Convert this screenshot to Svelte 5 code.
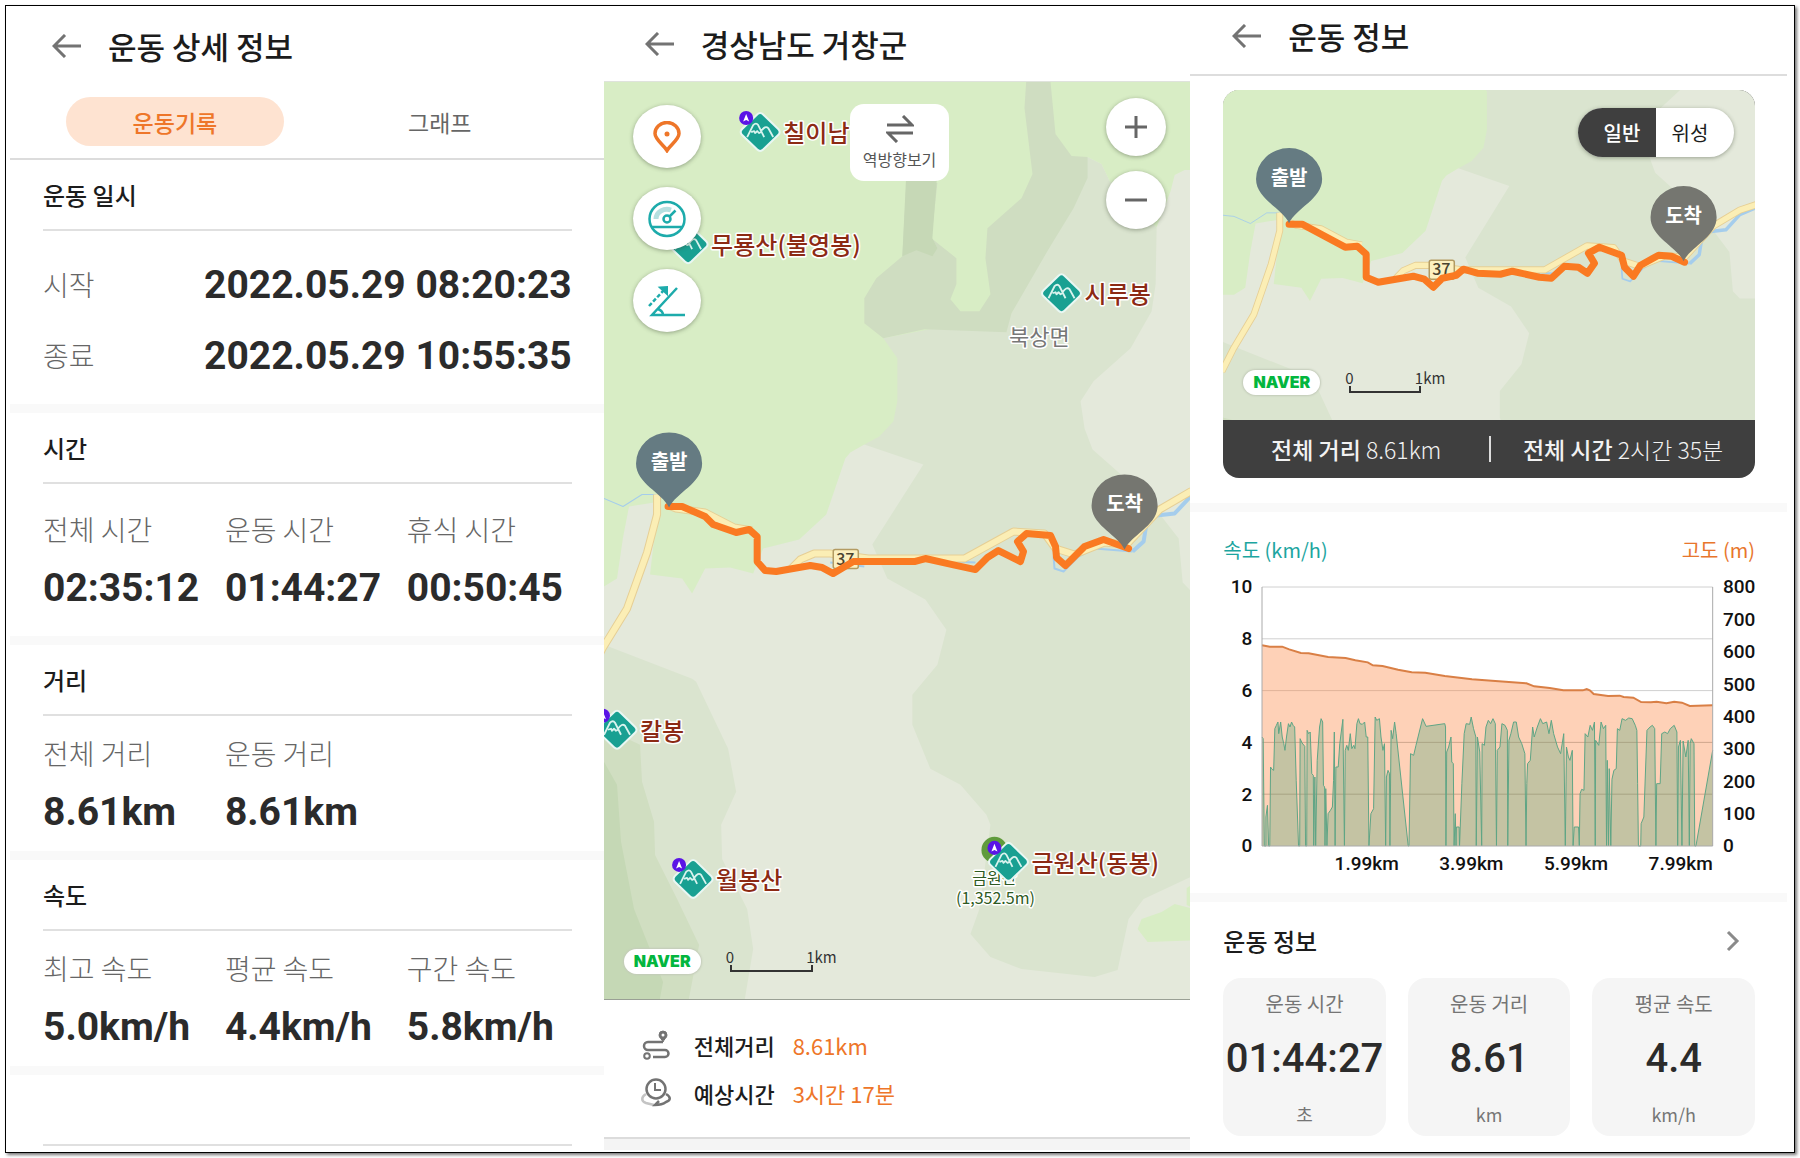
<script>
  let tab = $state('record');
  let mapType = $state('normal');

  const times = [
    { label: '시작', value: '2022.05.29 08:20:23' },
    { label: '종료', value: '2022.05.29 10:55:35' }
  ];

  const groups = [
    {
      title: '시간',
      roomy: true,
      items: [
        { label: '전체 시간', value: '02:35:12' },
        { label: '운동 시간', value: '01:44:27' },
        { label: '휴식 시간', value: '00:50:45' }
      ]
    },
    {
      title: '거리',
      items: [
        { label: '전체 거리', value: '8.61km' },
        { label: '운동 거리', value: '8.61km' }
      ]
    },
    {
      title: '속도',
      items: [
        { label: '최고 속도', value: '5.0km/h' },
        { label: '평균 속도', value: '4.4km/h' },
        { label: '구간 속도', value: '5.8km/h' }
      ]
    }
  ];

  const cards = [
    { label: '운동 시간', value: '01:44:27', unit: '초' },
    { label: '운동 거리', value: '8.61', unit: 'km' },
    { label: '평균 속도', value: '4.4', unit: 'km/h' }
  ];

  const peaks = [
    { x: 156, y: 50, name: '칠이남', badge: true },
    { x: 84, y: 162, name: '무룡산(불영봉)' },
    { x: 457, y: 211, name: '시루봉' },
    { x: 13, y: 647, name: '칼봉', badge: true },
    { x: 89, y: 796, name: '월봉산', badge: true },
    { x: 404, y: 779, name: '금원산(동봉)', badge: true }
  ];

  const speedTicks = [10, 8, 6, 4, 2, 0];
  const altTicks = [800, 700, 600, 500, 400, 300, 200, 100, 0];
  const distTicks = ['1.99km', '3.99km', '5.99km', '7.99km'];

  // plot space: 1159 x 777, y grows downwards
  const altitude =
    '0,175 20,179 52,179 70,187 100,198 120,199 170,210 215,213 240,220 272,226 285,235 310,237 350,248 385,256 420,257 470,267 540,277 600,282 680,289 700,298 740,303 775,310 825,310 835,306 843,310 853,321 890,327 920,326 930,330 955,332 975,345 1000,346 1015,344 1040,349 1060,344 1080,347 1100,357 1159,355';
  const speed =
    '0,450 3,455 6,777 10,777 10,690 14,655 17,777 20,777 22,540 26,547 30,550 33,425 37,415 41,405 43,440 48,405 52,450 56,470 59,490 63,450 68,410 72,420 76,405 80,415 84,420 88,580 94,777 97,777 98,455 103,468 110,478 112,777 115,777 116,430 120,440 124,435 128,560 132,565 133,777 136,570 138,777 142,520 148,420 152,395 156,405 158,595 161,600 162,777 164,605 167,777 170,680 176,670 181,660 184,580 186,435 188,777 190,540 196,540 200,470 208,397 212,777 214,490 218,475 222,490 227,440 231,485 236,475 239,485 244,410 248,395 252,410 258,412 264,405 268,450 272,450 275,777 280,680 287,665 291,390 295,400 302,395 306,450 311,490 315,470 318,777 320,570 324,550 328,560 329,777 332,430 336,455 341,405 345,440 376,777 378,777 382,500 390,505 396,475 413,395 422,418 470,410 472,420 473,777 475,495 480,480 486,450 488,525 492,530 494,777 497,680 499,777 500,720 507,720 508,777 514,590 520,440 525,410 534,412 538,390 544,425 550,450 551,777 554,450 560,495 565,777 566,470 572,475 576,420 582,400 588,410 594,395 600,410 603,777 605,490 612,480 617,410 625,415 631,430 632,777 635,460 640,440 647,405 654,405 660,450 668,470 676,500 679,777 681,590 683,530 690,520 696,420 700,450 708,420 716,395 722,410 732,405 738,440 744,400 750,440 760,480 768,500 776,440 780,777 783,480 788,510 792,520 798,490 800,777 803,720 814,720 816,777 818,620 822,607 828,610 831,440 838,450 844,415 850,430 855,405 857,777 858,460 866,475 872,405 878,425 884,415 886,777 888,520 891,777 893,545 897,777 900,577 905,550 911,545 914,425 920,430 926,395 935,400 943,393 952,395 960,415 964,430 966,590 968,777 974,777 975,710 982,690 990,430 998,420 1004,415 1010,425 1013,777 1015,590 1024,590 1028,440 1036,435 1043,440 1050,425 1060,415 1067,435 1069,777 1071,480 1076,460 1080,777 1083,462 1090,510 1096,460 1099,777 1101,470 1104,455 1111,470 1113,777 1116,777 1159,490';

  const roads =
    'M53 412V432L43 470 23 526-1 565-14 590M62 422 72 426 101 430 130 445 148 448M187 486 196 477 210 471H226L264 476H360L409 449 440 451 451 466 470 472 500 460 522 462 555 427 586 409 620 398';
</script>

{#snippet back()}
  <button class="back" aria-label="뒤로">
    <svg width="29" height="24" viewBox="0 0 29 24" fill="none" stroke="#737373" stroke-width="3">
      <path d="M13 1 2 12l11 11M2 12h27" />
    </svg>
  </button>
{/snippet}

{#snippet terrain()}
  <rect x="-20" y="-20" width="640" height="960" fill="#e4e9db" />
  <!-- 중간 숲 -->
  <path fill="#dae4cf" d="M279 256 402 230 483 75 497 82 505 99 552 145 551 202 547 229 526 266 489 299 476 319 480 346 488 367 513 389 553 429 574 456 578 500 586 508 620 508V794H586L539 816 524 836 513 887 490 894 417 886 386 874 366 851 375 826 386 742 382 732 356 702 326 686 308 642V612L333 582 342 547 321 517 283 496 268 462 319 382 260 362 240 340Z" />
  <path fill="#dae4cf" d="M-20 554 0 562 88 596 92 599 124 666 132 709 117 742 118 776 143 826 149 866 140 920H-20Z" />
  <!-- 밝은 숲 -->
  <path fill="#d8edc5" d="M-20-20H620V88H580L570 93 566 109 552 145 505 99 497 82 483 75 407 231 279 256 293 276V319L289 339 275 354 260 362 246 370 241 376 222 432 195 457 159 466 149 491 126 485 101 486 88 511 78 496 46 492 53 430 50 420 25 424 19 455 13 496 0 504H-20Z" />
  <path fill="#cfddc1" d="M423-20H446V0L451 52 467 74 483 75V96L469 126 444 167 407 231 402 250 320 247 279 256 260 241V216L272 196 298 174 302 101H333L327 156 352 176V202L346 217 356 229H375L386 212 381 176 383 146 417 116 428 92 420 26Z" />
  <path fill="#c6d8b6" d="M302 90H333L328 156 333 166 328 174 312 168 298 174Z" />
  <!-- 왼쪽 아래 능선 -->
  <path fill="#d0dec1" d="M-20 640 0 645 36 662 38 699 50 739 51 772 73 816 95 862 84 920H-20Z" />
  <path fill="#c5d8b5" d="M-20 670 0 679 13 702 17 759 30 826 59 899 55 920H-20Z" />
  <path fill="#d8edc5" d="M600 829 570 821 557 829 537 836 533 846 543 859 600 857ZM600 795 582 805V822L600 830Z" />
  <!-- 하천 -->
  <g fill="none" stroke="#a5cdec" stroke-linejoin="round">
    <path stroke-width="1" d="M-20 414 0 416 19 424 38 412 52 412" />
    <path stroke-width="4" d="M620 400 586 414 570 431 543 434 539 459 528 469" />
    <path stroke-width="2" d="M528 469 490 466 474 474 459 489 450 486 449 474M348 479 371 480M226 480l34 4" />
  </g>
  <!-- 도로 -->
  <g fill="none" stroke-linejoin="round">
    <path stroke="#e6cf95" stroke-width="8" d={roads} />
    <path stroke="#fbeeb5" stroke-width="6" d={roads} />
  </g>
{/snippet}

{#snippet roadSign(x, y)}
  <g>
    <rect {x} {y} width="25" height="19" rx="2" fill="#fcf0c0" stroke="#b39b62" stroke-width="1.5" />
    <text class="sign" x={x + 12} y={y + 15}>37</text>
  </g>
{/snippet}

{#snippet pin(x, y, label, color)}
  <g>
    <path d="M{x} {y}C{x - 7} {y - 15} {x - 33} {y - 24} {x - 33} {y - 44}a33 31 0 0 1 66 0C{x + 33} {y - 24} {x + 7} {y - 15} {x} {y}Z" fill={color} />
    <text class="pin-text" {x} y={y - 38}>{label}</text>
  </g>
{/snippet}

{#snippet legend(small)}
  <div class="legend">
    <span class="naver">NAVER</span>
    <div class="scale" class:small>
      <div class="scale-text"><span>0</span><span>1km</span></div>
      <div class="scale-bar"></div>
    </div>
  </div>
{/snippet}

<main class="frame">
  <!-- 운동 상세 정보 -->
  <section class="screen">
    <header class="bar">
      {@render back()}
      <h1>운동 상세 정보</h1>
    </header>
    <nav class="tabs">
      <button class:on={tab === 'record'} onclick={() => (tab = 'record')}>운동기록</button>
      <button class:on={tab === 'graph'} onclick={() => (tab = 'graph')}>그래프</button>
    </nav>

    <div class="block">
      <h2>운동 일시</h2>
      <dl class="times">
        {#each times as t}
          <div><dt>{t.label}</dt><dd>{t.value}</dd></div>
        {/each}
      </dl>
    </div>
    {#each groups as g}
      <div class="band"></div>
      <div class="block">
        <h2>{g.title}</h2>
        <dl class="stats" class:roomy={g.roomy}>
          {#each g.items as item}
            <div><dt>{item.label}</dt><dd>{item.value}</dd></div>
          {/each}
        </dl>
      </div>
    {/each}
    <div class="band"></div>
    <div class="block"><div class="empty"></div></div>
  </section>

  <!-- 코스 지도 -->
  <section class="screen">
    <header class="bar bar--map">
      {@render back()}
      <h1>경상남도 거창군</h1>
    </header>
    <div class="map">
      <svg class="canvas" viewBox="0 0 586 916" preserveAspectRatio="xMidYMid slice">
        {@render terrain()}
        {@render roadSign(229, 467)}
        <polyline class="route" points="64,424 78,424 101,434 109,442 132,450 145,447 153,454 153,479 161,488 172,489 206,483 218,485 229,491 249,479 310,479 321,476 348,482 371,487 383,475 394,468 416,479 419,469 413,459 422,451 446,453 451,464 452,475 461,483 480,464 499,457 524,466" />
        {@render pin(65, 425, '출발', '#657b82')}
        {@render pin(520, 467, '도착', '#757670')}

        <text class="town" x="435" y="263">북상면</text>
        <circle cx="390" cy="767" r="13" fill="#5f9b3c" />
        <text class="summit" y="801"><tspan x="390">금원산</tspan><tspan x="391" dy="20">(1,352.5m)</tspan></text>

        {#each peaks as p}
          <g transform="translate({p.x} {p.y})">
            <path d="M-3-17.500q3-3 6 0L18-3q3 3 0 6L3 17.500q-3 3-6 0L-18 3q-3-3 0-6Z" fill="#19a092" stroke="#e9f7f3" stroke-width="2" />
            <path d="M-13 5-7-7q3-3 5 0L4 5M-9 0l3-1 1 2 2-2 2 2 2-1M1-1q4-6 7-3L13 5" fill="none" stroke="#d9f3ee" stroke-width="1.800" stroke-linejoin="round" />
            {#if p.badge}
              <circle cx="-14" cy="-14" r="7" fill="#5a14e6" />
              <path d="M-14-18-17-10.500-14-12-11-10.500Z" fill="#fff" />
            {/if}
            <text class="peak" x="23" y="10">{p.name}</text>
          </g>
        {/each}
      </svg>

      <div class="tools tools--left">
        <button aria-label="위치">
          <svg width="30" height="32" viewBox="0 0 30 32" fill="none" stroke="#ee7629" stroke-width="3.500">
            <path d="M15 29.500C11 23 3 18.500 3 12.500a12 11 0 0 1 24 0C27 18.500 19 23 15 29.500Z" />
            <circle cx="15" cy="13" r="2.500" fill="#ee7629" stroke="none" />
          </svg>
        </button>
        <button aria-label="속도">
          <svg width="38" height="38" viewBox="0 0 38 38" fill="none" stroke="#1dabab" stroke-width="2.500">
            <path d="M8 19a11 10 0 0 1 15-9" stroke="#b5e0e0" stroke-width="5" />
            <ellipse cx="19" cy="19" rx="17.500" ry="17" />
            <path d="M4 27h30M21.500 16.500l6-6" />
            <circle cx="19" cy="19" r="3.500" />
          </svg>
        </button>
        <button aria-label="경사">
          <svg width="38" height="34" viewBox="0 0 38 34" fill="none" stroke="#1dabab" stroke-width="2.500">
            <path d="M29 4 4 31h33M10 25q5 2 5 6" />
            <path d="M1 22 17 5" stroke-dasharray="4 2" />
            <path d="M12 3.500 19 3v7Z" fill="#1dabab" stroke-width="2" />
          </svg>
        </button>
      </div>

      <button class="reverse">
        <svg width="28" height="28" viewBox="0 0 28 28" fill="none" stroke="#666" stroke-width="3">
          <path d="M1 10h25L17 1M27 18H2l9 9" />
        </svg>
        역방향보기
      </button>

      <div class="tools tools--right">
        <button aria-label="확대">
          <svg width="24" height="24" viewBox="0 0 24 24" stroke="#666" stroke-width="3"><path d="M1 12h22M12 1v22" /></svg>
        </button>
        <button aria-label="축소">
          <svg width="24" height="24" viewBox="0 0 24 24" stroke="#666" stroke-width="3"><path d="M1 12h22" /></svg>
        </button>
      </div>
      {@render legend(false)}
    </div>

    <dl class="summary">
      <div>
        <svg width="30" height="30" viewBox="0 0 30 30" fill="none" stroke="#737373" stroke-width="2.500">
          <path d="M22 12H7a4 4 0 0 0 0 8h17a3.500 3.500 0 0 1 0 7H12" />
          <path d="M22 12c-1-3-4-4-4-7a4 4 0 0 1 8 0c0 3-3 4-4 7Z" fill="#737373" stroke-width="1" />
          <circle cx="22" cy="5" r="1.500" fill="#fff" stroke="none" />
          <circle cx="6" cy="26" r="2.800" stroke-width="2" />
        </svg>
        <dt>전체거리</dt><dd>8.61km</dd>
      </div>
      <div>
        <svg width="30" height="30" viewBox="0 0 30 30" fill="none" stroke="#737373" stroke-width="2.500">
          <path d="M5 16c-5 3-5 7 0 9l8 2" stroke="#c4c4c4" />
          <path d="M25 16c5 3 5 6 0 8q-4 3-11 3l4-4" />
          <circle cx="15" cy="11" r="9.500" />
          <path d="M14 5v7h6" stroke-width="2" />
        </svg>
        <dt>예상시간</dt><dd>3시간 17분</dd>
      </div>
    </dl>
    <div class="sheet"></div>
  </section>

  <!-- 운동 정보 -->
  <section class="screen">
    <header class="bar bar--info">
      {@render back()}
      <h1>운동 정보</h1>
    </header>

    <div class="course">
      <div class="course__map">
        <svg class="canvas" viewBox="0 0 531 330" preserveAspectRatio="xMidYMid slice">
          <g transform="translate(11 -244) scale(.862 .89)">{@render terrain()}</g>
          {@render roadSign(206, 170)}
          <polyline class="route" points="66,134 79,134 122,157 134,156 143,164 143,187 155,192 190,186 201,189 210,197 219,188 233,185 240,179 254,183 277,184 289,181 316,187 328,188 341,176 355,177 364,183 371,173 365,163 376,157 398,165 401,177 410,186 417,175 435,165 448,166 461,172" />
          {@render pin(66, 133, '출발', '#657b82')}
          {@render pin(460, 171, '도착', '#757670')}
        </svg>
        <div class="toggle">
          <button class:on={mapType === 'normal'} onclick={() => (mapType = 'normal')}>일반</button>
          <button class:on={mapType === 'satellite'} onclick={() => (mapType = 'satellite')}>위성</button>
        </div>
        {@render legend(true)}
      </div>
      <div class="totals">
        <p><b>전체 거리</b> 8.61km</p>
        <p><b>전체 시간</b> 2시간 35분</p>
      </div>
    </div>

    <div class="band"></div>

    <div class="chart">
      <div class="chart__heads">
        <span class="teal">속도 (km/h)</span>
        <span class="orange">고도 (m)</span>
      </div>
      <div class="chart__body">
        <div class="axis axis--left">
          {#each speedTicks as t}<span>{t}</span>{/each}
        </div>
        <svg class="plot" viewBox="0 0 1159 777" preserveAspectRatio="none">
          {#each [0, 1, 2, 3, 4] as i}
            <line x1="0" x2="1159" y1={i * 155.4} y2={i * 155.4} stroke="#d0d0d0" />
          {/each}
          <polygon points="{altitude} 1159,777 0,777" fill="#fd8641" fill-opacity=".38" />
          <polyline points={altitude} fill="none" stroke="#d97f45" stroke-width="2" />
          <polygon points="{speed} 1159,777 0,777" fill="#5fab80" fill-opacity=".36" />
          {#each [3, 4] as i}
            <line x1="0" x2="1159" y1={i * 155.4} y2={i * 155.4} stroke="#8a7a60" stroke-opacity=".2" />
          {/each}
          <polyline points={speed} fill="none" stroke="#5fa585" />
          <path d="M0 0V777H1159V0" fill="none" stroke="#aaa" />
        </svg>
        <div class="axis axis--right">
          {#each altTicks as t}<span>{t}</span>{/each}
        </div>
        <div class="axis--bottom">
          {#each distTicks as t}<span>{t}</span>{/each}
        </div>
      </div>
    </div>

    <div class="band"></div>

    <div class="info">
      <div class="info__head">
        <h2>운동 정보</h2>
        <button aria-label="더보기">
          <svg width="14" height="22" viewBox="0 0 14 22" fill="none" stroke="#8a8a8a" stroke-width="3"><path d="m2 2 9 9-9 9" /></svg>
        </button>
      </div>
      <div class="cards">
        {#each cards as c}
          <div class="card">
            <span class="card__label">{c.label}</span>
            <strong>{c.value}</strong>
            <span class="card__unit">{c.unit}</span>
          </div>
        {/each}
      </div>
    </div>
  </section>
</main>

<style>
:global(body) {
  margin: 0;
  background: #fff;
}

.frame {
  display: grid;
  grid-template-columns: 594fr 587fr 597fr;
  min-height: calc(100vh - 10px);
  margin: 5px;
  padding: 0 7px 0 4px;
  box-sizing: border-box;
  border: 1px solid #000;
  box-shadow: 2px 2px 3px #777;
  background: #fff;
  color: #1c1c1c;
  font-family: "Noto Sans CJK KR", "Noto Sans", sans-serif;
}

.screen {
  display: flex;
  flex-direction: column;
  min-width: 0;
}

button {
  display: flex;
  align-items: center;
  justify-content: center;
  padding: 0;
  border: none;
  background: none;
  color: inherit;
  font-family: inherit;
  cursor: pointer;
}

h1, h2, dl, dd, p {
  margin: 0;
}

svg {
  display: block;
}

.bar {
  display: flex;
  align-items: center;
  gap: 27px;
  height: 80px;
  padding-left: 42px;
  box-sizing: border-box;
}

.bar h1 {
  font-size: 31px;
  line-height: 40px;
  font-weight: 500;
}

.bar--map {
  height: 76px;
  padding-left: 41px;
  border-bottom: 1px solid #dfe3dc;
}

.bar--info {
  height: 70px;
  padding-bottom: 8px;
  border-bottom: 2px solid #ddd;
}

.tabs {
  display: flex;
  gap: 47px;
  padding: 11px 55px 12px 56px;
  border-bottom: 2px solid #dcdcdc;
}

.tabs button {
  flex: 1;
  height: 49px;
  border-radius: 25px;
  color: #666;
  font-size: 23px;
}

.tabs .on {
  background: #fee3d1;
  color: #ee7629;
  font-weight: 500;
}

.block {
  padding: 0 32px 0 33px;
}

h2 {
  font-size: 24px;
  line-height: 69px;
  font-weight: 500;
}

.block h2 {
  border-bottom: 2px solid #e0e0e0;
}

.band {
  height: 9px;
  background: #f9f9f9;
}

.empty {
  height: 69px;
  border-bottom: 2px solid #e0e0e0;
}

dt {
  color: #666;
  font-size: 28px;
  line-height: 40px;
  font-weight: 300;
}

dd {
  padding-top: 2px;
  color: #2b2b2b;
  font-family: Roboto, sans-serif;
  font-size: 39px;
  line-height: 46px;
  font-weight: 700;
}

.times {
  padding: 17px 0 14px;
}

.times div {
  display: flex;
  align-items: center;
  justify-content: space-between;
  height: 71px;
}

.stats {
  display: grid;
  grid-template-columns: repeat(3, 1fr);
  column-gap: 6px;
  margin-right: -11px;
  padding: 17px 0 16px;
}

.stats dt {
  margin-bottom: 14px;
}

.roomy {
  padding: 25px 0;
}

.map {
  position: relative;
  aspect-ratio: 586 / 916;
  border-bottom: 1px solid #9aa095;
}

.canvas {
  position: absolute;
  inset: 0;
  width: 100%;
  height: 100%;
}

.route {
  fill: none;
  stroke: #fa7a22;
  stroke-width: 7px;
  stroke-linejoin: round;
  stroke-linecap: round;
}

.canvas text {
  text-anchor: middle;
  paint-order: stroke;
  stroke: #fff;
  stroke-width: 3px;
  stroke-linejoin: round;
}

.canvas .peak {
  text-anchor: start;
  fill: #8c2a14;
  font-size: 24px;
  font-weight: 500;
}

.canvas .town {
  fill: #777;
  font-size: 22px;
}

.canvas .summit {
  fill: #2d5a22;
  font-size: 16px;
}

.canvas .sign {
  fill: #4a4330;
  font-size: 16px;
  font-weight: 500;
  stroke: none;
}

.canvas .pin-text {
  fill: #fff;
  font-size: 20px;
  font-weight: 700;
  stroke: none;
}

.tools {
  position: absolute;
  display: flex;
  flex-direction: column;
}

.tools button {
  border-radius: 50%;
  background: #fff;
  box-shadow: 0 1px 4px rgba(60, 70, 50, 0.45);
}

.tools--left {
  top: 23px;
  left: 29px;
  gap: 19px;
}

.tools--left button {
  width: 68px;
  height: 63px;
}

.tools--right {
  top: 16px;
  right: 24px;
  gap: 15px;
}

.tools--right button {
  width: 60px;
  height: 58px;
}

.reverse {
  position: absolute;
  top: 22px;
  left: 42%;
  flex-direction: column;
  gap: 4px;
  width: 99px;
  height: 77px;
  border-radius: 14px;
  background: #fff;
  color: #555;
  font-size: 16px;
  line-height: 24px;
}

.legend {
  position: absolute;
  bottom: 25px;
  left: 20px;
  display: flex;
  align-items: flex-end;
  gap: 29px;
}

.naver {
  width: 77px;
  border-radius: 13px;
  background: #fff;
  box-shadow: 0 0 2px 1px #c3cbb9;
  color: #03b63e;
  font-family: Inter, sans-serif;
  font-size: 16px;
  line-height: 25px;
  font-weight: 900;
  text-align: center;
}

.scale {
  width: 83px;
  padding-bottom: 2px;
  color: #333;
  font-size: 15px;
  line-height: 20px;
}

.scale.small {
  width: 72px;
}

.scale-text {
  display: flex;
  justify-content: space-between;
  margin: 0 -24px -2px -4px;
}

.scale-bar {
  height: 5px;
  border: 2px solid #333;
  border-top: none;
}

.summary {
  padding: 21px 0 20px 37px;
}

.summary div {
  display: flex;
  align-items: center;
  height: 48px;
}

.summary dt {
  margin: 0 18px 0 23px;
  color: #1c1c1c;
  font-size: 22px;
  font-weight: 500;
}

.summary dd {
  padding: 0;
  color: #ee7629;
  font-family: inherit;
  font-size: 22px;
  font-weight: 400;
}

.sheet {
  height: 11px;
  border-top: 2px solid #dcdcdc;
  background: #f4f4f4;
}

.course {
  margin: 14px 32px 25px 33px;
  border-radius: 16px;
  background: #3f3f3f;
  overflow: hidden;
}

.course__map {
  position: relative;
  aspect-ratio: 531 / 330;
}

.toggle {
  position: absolute;
  top: 18px;
  right: 21px;
  display: flex;
  border-radius: 25px;
  background: #fff;
  box-shadow: 0 1px 4px rgba(60, 70, 50, 0.45);
  overflow: hidden;
}

.toggle button {
  width: 78px;
  height: 49px;
  padding-right: 10px;
  font-size: 20px;
}

.toggle button:first-child {
  padding: 0 0 0 10px;
}

.toggle .on {
  background: #3f3f3f;
  color: #fff;
  font-weight: 500;
}

.totals {
  display: grid;
  grid-template-columns: 1fr 1fr;
  padding: 16px 0;
  color: #f2f2f2;
  font-size: 23px;
  line-height: 26px;
  font-weight: 300;
  text-align: center;
}

.totals p + p {
  border-left: 2px solid #ddd;
}

.totals b {
  font-weight: 500;
}

.chart {
  padding: 24px 32px 18px 33px;
}

.chart__heads {
  display: flex;
  justify-content: space-between;
  font-size: 20px;
  line-height: 28px;
}

.teal {
  color: #1ca5a0;
}

.orange {
  color: #e8762c;
}

.chart__body {
  display: grid;
  grid-template-columns: 29px 1fr 32px;
  column-gap: 10px;
  margin-top: 12px;
  color: #111;
  font-family: Roboto, sans-serif;
  font-size: 19px;
  line-height: 22px;
  font-weight: 500;
}

.axis {
  display: flex;
  flex-direction: column;
  justify-content: space-between;
}

.axis--left {
  text-align: right;
}

.plot {
  width: 100%;
  height: 259px;
  margin: 11px 0;
  overflow: visible;
}

.plot :global(*) {
  vector-effect: non-scaling-stroke;
}

.axis--bottom {
  grid-column: 2;
  display: grid;
  grid-template-columns: repeat(4, 1fr);
  margin: -4px -20px 0 52px;
  text-align: center;
}

.info {
  padding: 4px 32px 12px 33px;
}

.info__head {
  display: flex;
  align-items: center;
  justify-content: space-between;
  padding: 0 15px 3px 0;
}

.cards {
  display: grid;
  grid-template-columns: repeat(3, 1fr);
  gap: 22px;
}

.card {
  display: flex;
  flex-direction: column;
  align-items: center;
  padding: 12px 0 8px;
  border-radius: 18px;
  background: #f5f5f5;
  color: #757575;
}

.card__label {
  font-size: 20px;
  line-height: 28px;
}

.card strong {
  color: #2b2b2b;
  font-family: Roboto, sans-serif;
  font-size: 40px;
  line-height: 82px;
  font-weight: 500;
}

.card__unit {
  font-size: 18px;
  line-height: 28px;
}
</style>
